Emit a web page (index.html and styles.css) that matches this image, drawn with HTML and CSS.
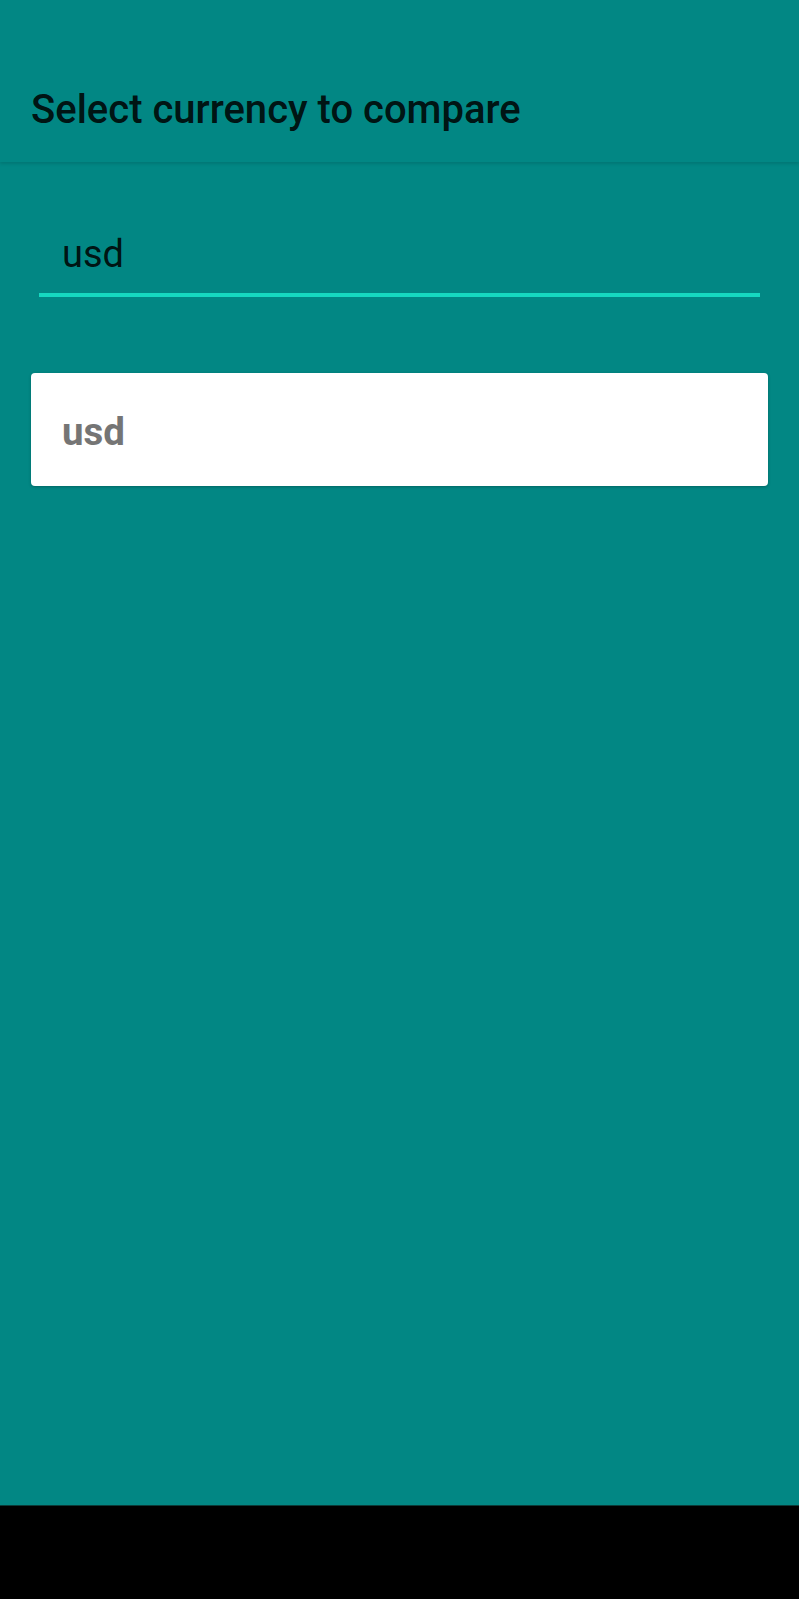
FILE: index.html
```html
<!DOCTYPE html>
<html>
<head>
<meta charset="utf-8">
<link rel="stylesheet" href="styles.css">
</head>
<body>
<div class="screen">
  <header class="appbar">
    <h1 class="title">Select currency to compare</h1>
  </header>
  <main class="content">
    <div class="field">
      <div class="field-text">usd</div>
      <div class="field-line"></div>
    </div>
    <div class="card">
      <div class="card-text">usd</div>
    </div>
  </main>
  <div class="navbar"></div>
</div>
</body>
</html>
```
FILE: styles.css
```css
html, body {
  margin: 0;
  padding: 0;
  background: #000;
}
.screen {
  display: flex;
  flex-direction: column;
  height: 1599px;
  background: #028784;
  font-family: Roboto, "Noto Sans", sans-serif;
}
.appbar {
  height: 162px;
  box-sizing: border-box;
  padding: 90px 0 0 31px;
  background: #028784;
  box-shadow: 0 2px 3px rgba(0, 0, 0, 0.12);
  position: relative;
  z-index: 1;
}
.title {
  margin: 0;
  font-size: 40px;
  line-height: 40px;
  font-weight: 500;
  color: rgba(0, 0, 0, 0.87);
}
.content {
  flex: 1;
  display: flex;
  flex-direction: column;
  padding: 0 31px;
}
.field {
  margin: 73px 8px 0 8px;
  display: flex;
  flex-direction: column;
}
.field-text {
  padding-left: 23px;
  font-size: 38px;
  line-height: 38px;
  color: rgba(0, 0, 0, 0.87);
}
.field-line {
  margin-top: 20px;
  height: 4px;
  background: #16d8c0;
}
.card {
  margin-top: 76px;
  height: 113px;
  box-sizing: border-box;
  padding: 40px 0 0 31px;
  background: #fff;
  border-radius: 4px;
  box-shadow: 0 1px 3px rgba(0, 0, 0, 0.25);
}
.card-text {
  font-size: 38.5px;
  line-height: 38.5px;
  font-weight: 700;
  color: #757575;
}
.navbar {
  height: 94px;
  background: #000;
  border-top: 1px solid #0a3b38;
  box-sizing: border-box;
}
```
